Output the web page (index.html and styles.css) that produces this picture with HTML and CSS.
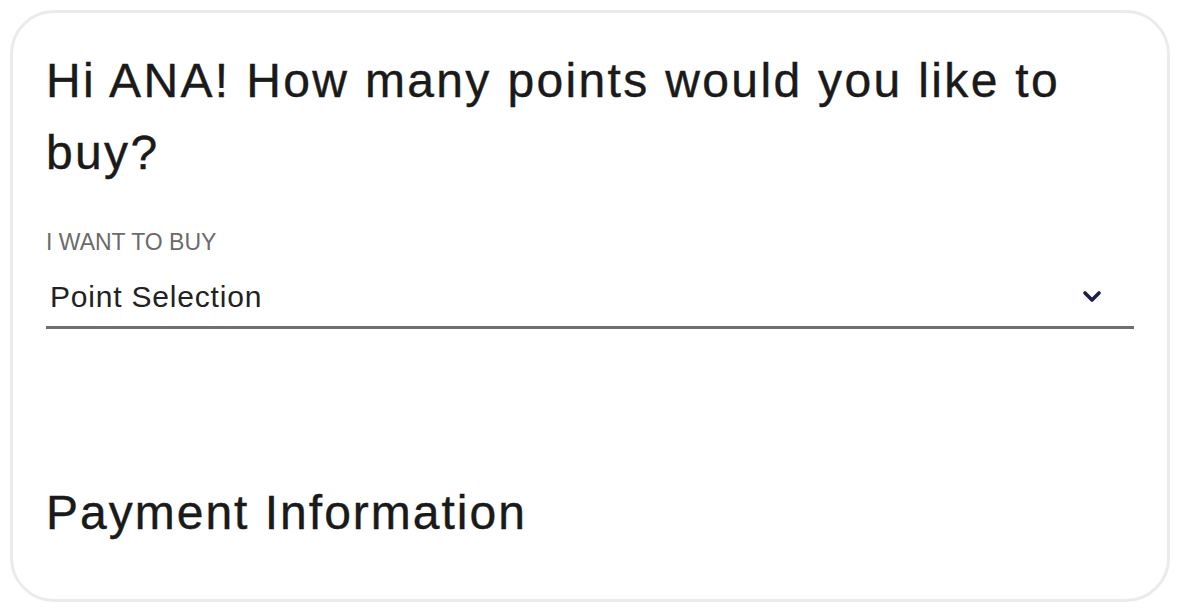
FILE: index.html
```html
<!DOCTYPE html>
<html lang="en">
    <head>
        <meta charset="UTF-8">
        <meta name="viewport" content="width=device-width, initial-scale=1.0">
        <title>Buy Points</title>
        <link rel="stylesheet" href="styles.css">
    </head>
    <body>
        <div class="cartao">
            <h1 class="titulo">Hi ANA! How many points would you like to buy?</h1>

            <div class="campo">
                <label class="rotulo">I WANT TO BUY</label>
                <div class="selecao">
                    <span class="selecao-texto">Point Selection</span>
                    <svg class="seta" width="20" height="13" viewBox="0 0 20 13">
                        <path d="M3 3 L10 10 L17 3" fill="none" stroke="#1b1f48" stroke-width="3.6" stroke-linecap="round" stroke-linejoin="round"/>
                    </svg>
                </div>
            </div>

            <h2 class="titulo titulo-pagamento">Payment Information</h2>
        </div>
    </body>
</html>
```

FILE: styles.css
```css
html, body {
    height: 100%;
}

body {
    margin: 0;
    padding: 10px 10px 8px 10px;
    box-sizing: border-box;
    background: #fff;
    font-family: 'Liberation Sans', Arial, sans-serif;
    color: #1c1c1c;
}

.cartao {
    height: 100%;
    box-sizing: border-box;
    border: 3px solid #ebebeb;
    border-radius: 44px;
    padding: 32px 33px 0 33px;
    display: flex;
    flex-direction: column;
}

.titulo {
    margin: 0;
    font-size: 48px;
    font-weight: normal;
    line-height: 72px;
    letter-spacing: 2.35px;
    color: #1a1a1a;
    -webkit-text-stroke: 0.4px #1a1a1a;
}

.campo {
    margin-top: 39px;
    display: flex;
    flex-direction: column;
}

.rotulo {
    font-size: 23px;
    line-height: 28px;
    color: #6b6b6b;
}

.selecao {
    margin-top: 20px;
    display: flex;
    align-items: center;
    justify-content: space-between;
    padding: 0 32px 0 4px;
    height: 50px;
    border-bottom: 3px solid #6f6f6f;
}

.selecao-texto {
    font-size: 30px;
    letter-spacing: 0.8px;
    color: #222;
    margin-bottom: 8px;
}

.seta {
    display: block;
    margin-bottom: 10px;
}

.titulo-pagamento {
    margin-top: 148px;
    letter-spacing: 2px;
}
```
